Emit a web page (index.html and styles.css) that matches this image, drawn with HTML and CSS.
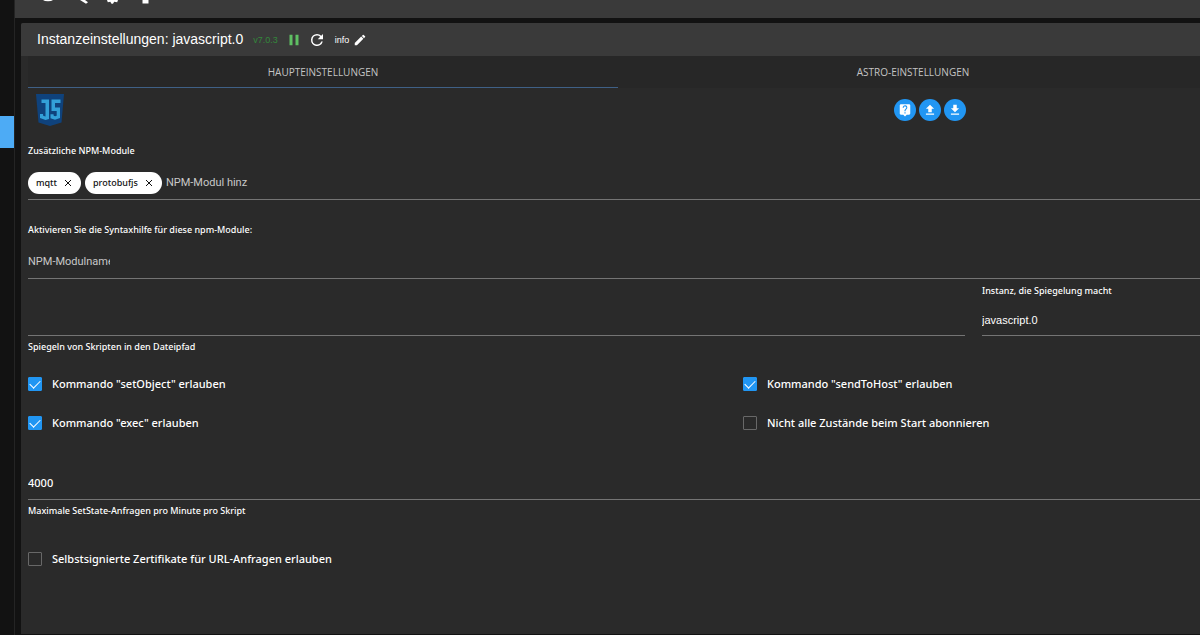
FILE: index.html
```html
<!DOCTYPE html>
<html lang="de">
<head>
<meta charset="utf-8">
<title>Instanzeinstellungen: javascript.0</title>
<meta name="viewport" content="width=device-width, initial-scale=1">
<link rel="stylesheet" href="styles.css">
</head>
<body>
<div class="app">
  <nav class="sidebar" aria-label="Navigation"><a class="sidebar-active" href="#" aria-label="Instanzen"></a></nav>
  <div class="workspace">
    <div class="topbar">
      <svg class="topbar-icons" width="110" height="5" viewBox="40 0 110 5" aria-hidden="true">
        <path d="M43 0a5.500 2.200 0 0 0 10 0z" fill="#fff"/>
        <path d="M80 0h5l3 2.200-2 1.500z" fill="#fff"/>
        <path d="M107 0h11l-.8 2.200-3-.4-1.200 2h-1.500l-1.200-2-2.500.4z" fill="#fff"/>
        <path d="M142.500 0h6v3.500h-6z" fill="#fff"/>
      </svg>
    </div>
    <main class="panel">
      <header class="panel-header">
        <h1 class="title">Instanzeinstellungen: javascript.0</h1>
        <span class="version">v7.0.3</span>
        <button class="icon-button pause" type="button" aria-label="Pause"><svg width="18" height="18" viewBox="0 0 24 24"><path d="M6 19h4V5H6v14zm8-14v14h4V5h-4z"/></svg></button>
        <button class="icon-button reload" type="button" aria-label="Neu laden"><svg width="18" height="18" viewBox="0 0 24 24"><path d="M17.650 6.350A7.958 7.958 0 0 0 12 4a8 8 0 1 0 7.730 10h-2.080A6 6 0 1 1 12 6c1.660 0 3.140.69 4.220 1.780L13 11h7V4l-2.350 2.350z"/></svg></button>
        <span class="log-level">info</span>
        <button class="icon-button" type="button" aria-label="Bearbeiten"><svg width="14" height="14" viewBox="0 0 24 24"><path d="M3 17.250V21h3.750L17.810 9.940l-3.750-3.750L3 17.250zM20.710 7.040a1 1 0 0 0 0-1.410l-2.340-2.340a1 1 0 0 0-1.410 0l-1.830 1.830 3.750 3.750 1.830-1.830z"/></svg></button>
      </header>
      <div class="tabs" role="tablist">
        <button class="tab tab-active" type="button" role="tab" aria-selected="true">HAUPTEINSTELLUNGEN</button>
        <button class="tab" type="button" role="tab" aria-selected="false">ASTRO-EINSTELLUNGEN</button>
      </div>
      <form class="settings">
        <div class="tools">
          <svg class="logo" width="28" height="32" viewBox="0 0 28 32" role="img" aria-label="JavaScript">
            <path d="M0 0h28l-2.500 28.500L14 32 2.500 28.500z" fill="#0f427c"/>
            <path d="M5.500 5.500h7.500v19.500l-3.500 1-5.500-2v-4h3l.2 1.800 2.300.7V9H5.500z" fill="#33a0d8"/>
            <path d="M15.500 5.500h9v3.500h-5.500v4.500h5v10.500l-5 1.800-4.500-1.500v-4h3l.2 1.500 1.500.5 1.500-.6v-4.700h-5.200z" fill="#33a0d8"/>
          </svg>
          <div class="actions">
            <button class="round" type="button" aria-label="Hilfe"><svg width="14" height="14" viewBox="0 0 24 24"><path d="M19 2H5a2 2 0 0 0-2 2v14c0 1.100.9 2 2 2h4l3 3 3-3h4a2 2 0 0 0 2-2V4a2 2 0 0 0-2-2zm-6 16h-2v-2h2v2zm2.070-7.750l-.9.920C13.450 11.900 13 12.500 13 14h-2v-.5c0-1.100.45-2.100 1.170-2.830l1.240-1.260A2 2 0 1 0 10 8H8a4 4 0 1 1 7.070 2.250z"/></svg></button>
            <button class="round" type="button" aria-label="Hochladen"><svg width="14" height="14" viewBox="0 0 24 24"><path d="M9 16h6v-6h4l-7-7-7 7h4zm-4 2h14v2H5z"/></svg></button>
            <button class="round" type="button" aria-label="Herunterladen"><svg width="14" height="14" viewBox="0 0 24 24"><path d="M19 9h-4V3H9v6H5l7 7 7-7zM5 18v2h14v-2H5z"/></svg></button>
          </div>
        </div>

        <label class="caption" for="modules">Zusätzliche NPM-Module</label>
        <div class="field chips">
          <span class="chip">mqtt<button class="remove" type="button" aria-label="mqtt entfernen"><svg width="8" height="8" viewBox="0 0 8 8"><path d="M1 1l6 6M7 1L1 7"/></svg></button></span>
          <span class="chip">protobufjs<button class="remove" type="button" aria-label="protobufjs entfernen"><svg width="8" height="8" viewBox="0 0 8 8"><path d="M1 1l6 6M7 1L1 7"/></svg></button></span>
          <input class="entry" id="modules" type="text" placeholder="NPM-Modul hinz">
        </div>

        <label class="caption" for="types">Aktivieren Sie die Syntaxhilfe für diese npm-Module:</label>
        <div class="field types"><input class="entry" id="types" type="text" placeholder="NPM-Modulname"></div>

        <div class="mirror">
          <div class="mirror-path">
            <div class="field"><input class="line-input" id="path" type="text"></div>
            <label class="helper" for="path">Spiegeln von Skripten in den Dateipfad</label>
          </div>
          <div class="mirror-instance">
            <label class="helper" for="instance">Instanz, die Spiegelung macht</label>
            <div class="field"><select class="select" id="instance"><option>javascript.0</option></select></div>
          </div>
        </div>

        <div class="checks">
          <label class="check"><input type="checkbox" checked><span>Kommando "setObject" erlauben</span></label>
          <label class="check"><input type="checkbox" checked><span>Kommando "sendToHost" erlauben</span></label>
          <label class="check"><input type="checkbox" checked><span>Kommando "exec" erlauben</span></label>
          <label class="check"><input type="checkbox"><span>Nicht alle Zustände beim Start abonnieren</span></label>
        </div>

        <div class="field limit"><input class="line-input" id="limit" type="text" value="4000"></div>
        <label class="helper" for="limit">Maximale SetState-Anfragen pro Minute pro Skript</label>

        <label class="check certificate"><input type="checkbox"><span>Selbstsignierte Zertifikate für URL-Anfragen erlauben</span></label>
      </form>
    </main>
  </div>
</div>
</body>
</html>
```
FILE: styles.css
```css
* { box-sizing: border-box; }

body {
  margin: 0;
  background: #121212;
  color: #fff;
  font: 500 11px/16px "Noto Sans", sans-serif;
  overflow: hidden;
}

button, input, select { font: inherit; color: inherit; }
button { padding: 0; border: 0; background: none; cursor: pointer; }
svg { display: block; fill: currentColor; }

.app { display: flex; min-height: 100vh; }

.sidebar {
  flex: 0 0 15px;
  padding-top: 116px;
  border-right: 1px solid #242424;
}
.sidebar-active { display: block; height: 32px; background: #4dabf5; }

.workspace { flex: 1; min-width: 0; display: flex; flex-direction: column; }
.topbar { height: 18px; padding-left: 25px; background: #3a3a3a; }

.panel {
  flex: 1;
  margin: 5px 0 1px 6px;
  border-radius: 2px 0 0 0;
  background: #2a2a2a;
  overflow: hidden;
}

.panel-header {
  display: flex;
  align-items: center;
  height: 33px;
  padding-left: 16px;
  background: #3a3a3a;
  font-family: "Liberation Sans", sans-serif;
}
.title { margin: 0 10px 0 0; padding-bottom: 2px; font-size: 14px; font-weight: 400; }
.version { margin-right: 7px; color: #33883a; font-size: 9px; font-weight: 400; }
.icon-button { color: #fff; }
.pause { margin-right: 5px; color: #5fbf63; }
.reload { margin-right: 9px; }
.log-level { margin-right: 4px; font-size: 9px; }

.tabs {
  display: grid;
  grid-template-columns: 1fr 1fr;
  height: 32px;
  margin: 0 -8px 0 7px;
  background: #272727;
}
.tab {
  border-bottom: 1px solid transparent;
  color: #c4c4c4;
  font: 400 10px/16px "Open Sans", sans-serif;
}
.tab-active { border-bottom-color: #3f6086; }

.settings { padding-left: 7px; }

.tools {
  display: flex;
  justify-content: space-between;
  height: 55px;
  padding: 6px 234px 0 8px;
}
.actions { display: flex; gap: 3px; padding-top: 5px; }
.round {
  display: grid;
  place-items: center;
  width: 22px;
  height: 22px;
  border-radius: 50%;
  background: #2196f3;
}

.caption { display: block; font-size: 9px; line-height: 16px; }
.helper { display: block; font-size: 9px; line-height: 12px; }

.field {
  display: flex;
  align-items: center;
  height: 41px;
  margin-bottom: 22px;
  padding-top: 8px;
  border-bottom: 1px solid #747474;
}
.chips { gap: 4px; }
.chip {
  display: flex;
  align-items: center;
  gap: 7px;
  height: 22px;
  padding: 0 9px 0 8px;
  border-radius: 11px;
  background: #fff;
  color: #111;
  font-size: 9px;
}
.remove svg { fill: none; stroke: #111; stroke-width: 1; }

.entry, .line-input, .select {
  padding: 0;
  border: 0;
  outline: 0;
  background: none;
}
.entry { width: 82px; font: 400 11px/16px Roboto, sans-serif; }
.entry::placeholder { color: #c8c8c8; opacity: 1; }
.line-input { width: 100%; }
.types { margin-bottom: 6px; }

.mirror {
  display: grid;
  grid-template-columns: 937fr 218fr;
  gap: 17px;
  margin-bottom: 23px;
}
.mirror .field { height: 39px; margin-bottom: 5px; }
.mirror-path { padding-top: 12px; }
.mirror-instance .field { margin-bottom: 0; }
.select {
  width: 100%;
  appearance: none;
  font: 400 11px/16px "Liberation Sans", sans-serif;
}

.checks {
  display: grid;
  grid-template-columns: 715fr 457fr;
  row-gap: 23px;
}
.check { display: flex; align-items: center; gap: 10px; }
.check input {
  display: grid;
  place-items: center;
  flex: none;
  appearance: none;
  width: 14px;
  height: 14px;
  margin: 0;
  border: 1px solid #686868;
  border-radius: 1px;
}
.check input:checked { border-color: #2196f3; background: #2196f3; }
.check input:checked::before {
  content: "";
  width: 9px;
  height: 5px;
  margin-bottom: 3px;
  border: solid #fff;
  border-width: 0 0 1px 1px;
  transform: rotate(-45deg);
}

.limit { margin: 28px 0 5px; }
.certificate { margin-top: 34px; }
```
